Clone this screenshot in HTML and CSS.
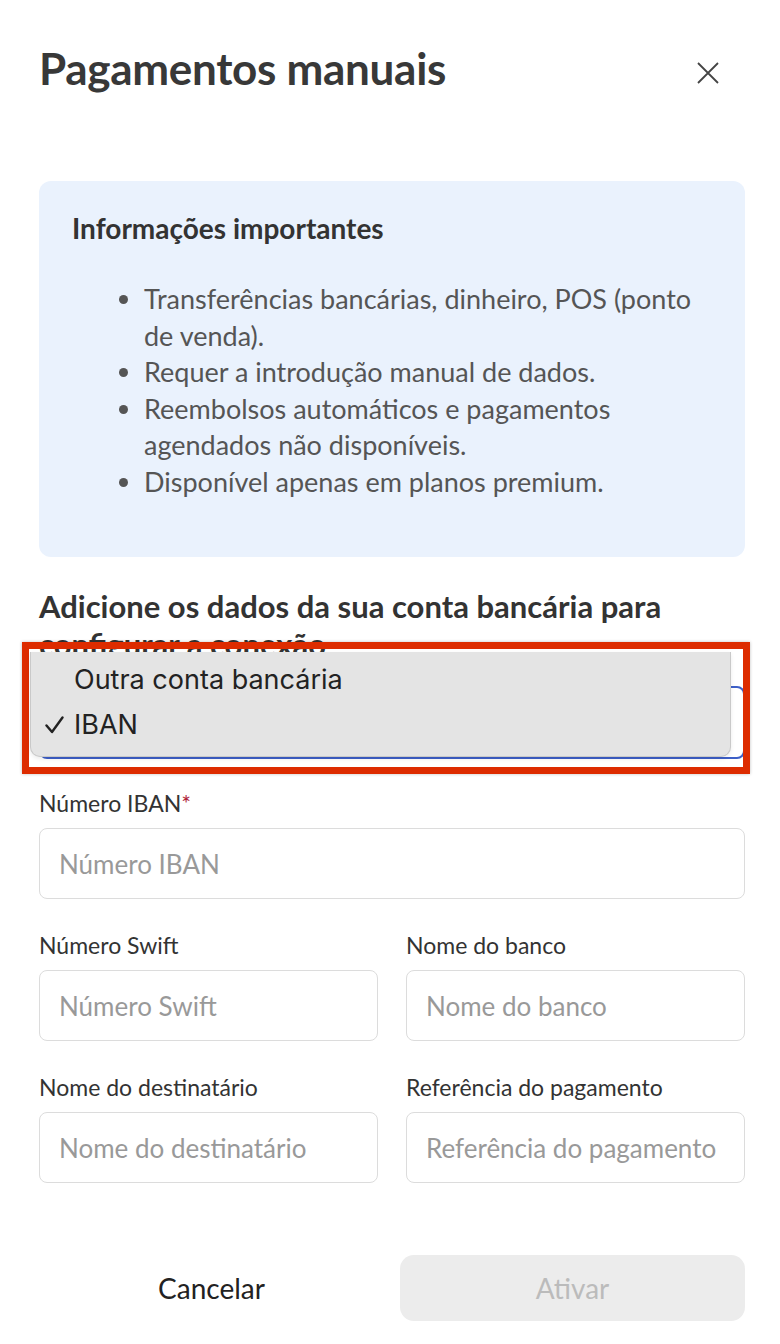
FILE: index.html
```html
<!DOCTYPE html>
<html lang="pt">
<head>
<meta charset="utf-8">
<title>Pagamentos manuais</title>
<link rel="stylesheet" href="styles.css">
</head>
<body>
<div class="modal">
  <header class="modal-header">
    <h1 class="modal-title">Pagamentos manuais</h1>
    <button class="close-btn" aria-label="Fechar">
      <svg width="24" height="24" viewBox="0 0 24 24"><path d="M2 2 L22 22 M22 2 L2 22" stroke="#444" stroke-width="1.8" fill="none"/></svg>
    </button>
  </header>

  <section class="info-box">
    <h2 class="info-title">Informações importantes</h2>
    <ul class="info-list">
      <li>Transferências bancárias, dinheiro, POS (ponto de venda).</li>
      <li>Requer a introdução manual de dados.</li>
      <li>Reembolsos automáticos e pagamentos agendados não disponíveis.</li>
      <li>Disponível apenas em planos premium.</li>
    </ul>
  </section>

  <h2 class="section-title">Adicione os dados da sua conta bancária para configurar a conexão</h2>

  <div class="select-wrap">
    <div class="select-box"></div>
    <div class="annotation"></div>
    <div class="popup">
      <div class="option"><span class="check"></span>Outra conta bancária</div>
      <div class="option"><span class="check"><svg width="19" height="18" viewBox="0 0 19 18"><path d="M1.5 9.5 L7 16 L17.5 1.5" stroke="#222" stroke-width="2.4" fill="none" stroke-linecap="round" stroke-linejoin="round"/></svg></span>IBAN</div>
    </div>
  </div>

  <div class="field">
    <label class="label">Número IBAN<span class="req">*</span></label>
    <div class="input"><span class="ph">Número IBAN</span></div>
  </div>

  <div class="row">
    <div class="field">
      <label class="label">Número Swift</label>
      <div class="input"><span class="ph">Número Swift</span></div>
    </div>
    <div class="field">
      <label class="label">Nome do banco</label>
      <div class="input"><span class="ph">Nome do banco</span></div>
    </div>
  </div>

  <div class="row">
    <div class="field">
      <label class="label">Nome do destinatário</label>
      <div class="input"><span class="ph">Nome do destinatário</span></div>
    </div>
    <div class="field">
      <label class="label">Referência do pagamento</label>
      <div class="input"><span class="ph">Referência do pagamento</span></div>
    </div>
  </div>

  <footer class="footer">
    <button class="btn btn-cancel">Cancelar</button>
    <button class="btn btn-primary" disabled>Ativar</button>
  </footer>
</div>
</body>
</html>
```

FILE: styles.css
```css
* { box-sizing: border-box; }
html, body { margin: 0; padding: 0; background: #fff; }
body {
  font-family: "Lato", "Open Sans", sans-serif;
  color: #333;
  width: 780px;
}
.modal {
  padding: 40px 35px 24px 39px;
}
.modal-header {
  display: flex;
  justify-content: space-between;
  align-items: center;
  height: 56px;
}
.modal-title {
  margin: 0;
  font-size: 44px;
  font-weight: 700;
  color: #383838;
  letter-spacing: -0.3px;
}
.close-btn {
  background: none;
  border: 0;
  padding: 0;
  margin: 9px 25px 0 0;
  width: 24px;
  height: 24px;
  display: flex;
}
.info-box {
  margin-top: 85px;
  background: #eaf2fd;
  border-radius: 12px;
  padding: 30px 32px 57px 33px;
}
.info-title {
  margin: 0;
  font-size: 28px;
  font-weight: 700;
  line-height: 34px;
  color: #333;
}
.info-list {
  margin: 36px 0 0 0;
  padding-left: 72px;
  font-size: 27px;
  line-height: 36.5px;
  color: #555;
}
.section-title {
  margin: 30px 0 0 0;
  font-size: 31px;
  font-weight: 700;
  line-height: 38px;
  color: #333;
}
.select-wrap {
  position: relative;
  height: 73px;
  margin-top: 23px;
}
.select-box {
  height: 73px;
  border: 2px solid #3d5fc7;
  border-radius: 8px;
  background: #fff;
}
.annotation {
  position: absolute;
  left: -17px;
  top: -44px;
  width: 728px;
  height: 132px;
  border: 7px solid #dd2c00;
  box-shadow: 0 0 3px rgba(0,0,0,0.25);
}
.popup {
  position: absolute;
  left: -9px;
  top: -34px;
  width: 701px;
  height: 105px;
  background: #e4e4e4;
  border: 1px solid #c9c9c9;
  border-top: 0;
  border-radius: 0 0 10px 10px;
  padding-top: 5px;
  font-family: "Inter", "Roboto", sans-serif;
  font-size: 27px;
  color: #222;
  box-shadow: 0 2px 4px rgba(0,0,0,0.08);
}
.option {
  display: flex;
  align-items: center;
  height: 45px;
}
.check {
  width: 43px;
  display: flex;
  justify-content: flex-end;
  padding-right: 10px;
}
.field { display: flex; flex-direction: column; }
.label {
  font-size: 23px;
  color: #333;
  margin-top: 31px;
  margin-bottom: 12px;
  line-height: 26px;
}
.req { color: #b0243a; }
.input {
  height: 71px;
  border: 1px solid #dcdcdc;
  border-radius: 8px;
  padding: 0 18px 0 19px;
  display: flex;
  align-items: center;
  font-size: 26px;
  color: #999;
}
.ph {
  flex: 1;
  min-width: 0;
  white-space: nowrap;
  overflow: hidden;
}
.row {
  display: grid;
  grid-template-columns: 1fr 1fr;
  gap: 28px;
}
.row .label { margin-top: 33px; }
.footer {
  display: flex;
  gap: 16px;
  margin-top: 72px;
}
.btn {
  flex: 1;
  height: 66px;
  border: 0;
  border-radius: 14px;
  font-family: inherit;
  font-size: 28px;
  background: none;
  color: #222;
}
.btn-primary {
  background: #ececec;
  color: #bbb;
}
```
